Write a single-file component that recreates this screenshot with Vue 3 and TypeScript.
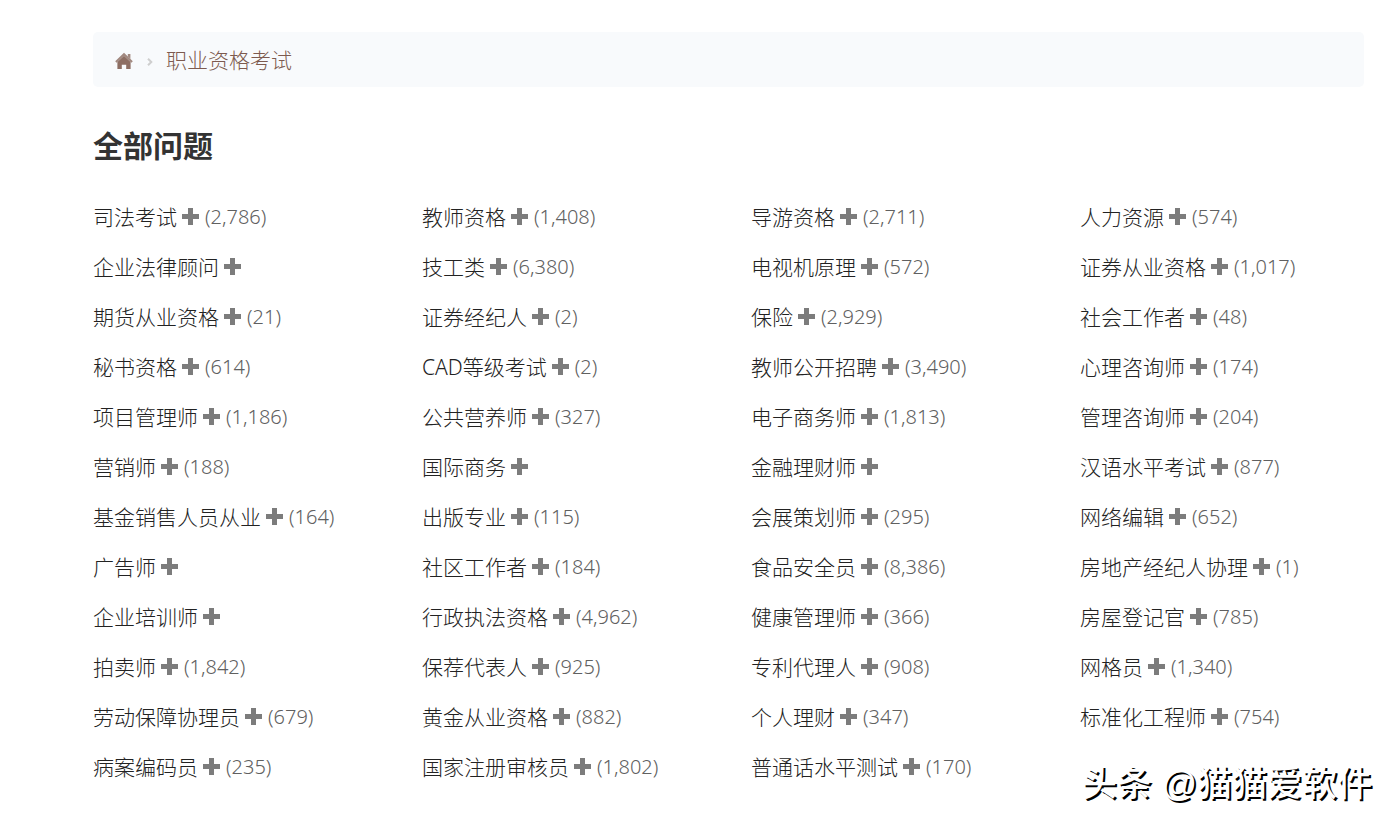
<script setup lang="ts">
interface Category {
  name: string
  count?: string
}

const toItem = (entry: string): Category => {
  const [name, count] = entry.split('|')
  return { name, count }
}

const categories: Category[] = [
  '司法考试|2,786', '教师资格|1,408', '导游资格|2,711', '人力资源|574',
  '企业法律顾问', '技工类|6,380', '电视机原理|572', '证券从业资格|1,017',
  '期货从业资格|21', '证券经纪人|2', '保险|2,929', '社会工作者|48',
  '秘书资格|614', 'CAD等级考试|2', '教师公开招聘|3,490', '心理咨询师|174',
  '项目管理师|1,186', '公共营养师|327', '电子商务师|1,813', '管理咨询师|204',
  '营销师|188', '国际商务', '金融理财师', '汉语水平考试|877',
  '基金销售人员从业|164', '出版专业|115', '会展策划师|295', '网络编辑|652',
  '广告师', '社区工作者|184', '食品安全员|8,386', '房地产经纪人协理|1',
  '企业培训师', '行政执法资格|4,962', '健康管理师|366', '房屋登记官|785',
  '拍卖师|1,842', '保荐代表人|925', '专利代理人|908', '网格员|1,340',
  '劳动保障协理员|679', '黄金从业资格|882', '个人理财|347', '标准化工程师|754',
  '病案编码员|235', '国家注册审核员|1,802', '普通话水平测试|170',
].map(toItem)
</script>

<template>
  <div class="page">
    <nav class="breadcrumb" aria-label="breadcrumb">
      <a class="home" href="#" aria-label="首页">
        <svg width="18" height="18" viewBox="0 0 18 18" aria-hidden="true">
          <path class="roof" d="M9 .8 17.800 9.200 16.400 10.700 9 3.800 1.600 10.700 .2 9.200z" />
          <path d="M9 3.800 15.600 10V17H11.200v-4.200H6.800V17H2.400v-7z" />
          <path class="roof" d="M12.800 2h2.600v5L12.800 4.600z" />
        </svg>
      </a>
      <svg class="chevron" width="6" height="8" viewBox="0 0 6 8" aria-hidden="true">
        <path d="M1 .8 4.300 4 1 7.200" />
      </svg>
      <a class="crumb" href="#">职业资格考试</a>
    </nav>

    <main>
      <h1>全部问题</h1>
      <ul class="grid">
        <li v-for="item in categories" :key="item.name">
          <a class="name" href="#">{{ item.name }}</a>
          <button class="expand" type="button" :aria-label="'展开' + item.name">
            <svg width="17" height="17" viewBox="0 0 17 17" aria-hidden="true">
              <path d="M6 0h5v6h6v5h-6v6H6v-6H0V6h6z" />
            </svg>
          </button>
          <span v-if="item.count" class="count">({{ item.count }})</span>
        </li>
      </ul>
    </main>

    <div class="watermark">头条 @猫猫爱软件</div>
  </div>
</template>

<style>
body {
  margin: 0;
  background: #fff;
}
</style>

<style scoped>
.page {
  position: relative;
  padding: 32px 34px 32px 93px;
  font-family: "Noto Sans", "Noto Sans CJK SC", sans-serif;
  font-size: 21px;
  font-weight: 300;
  color: #222;
}

a {
  color: inherit;
  text-decoration: none;
}

.breadcrumb {
  display: flex;
  align-items: center;
  height: 55px;
  padding-left: 22px;
  border-radius: 5px;
  background: #f8fafc;
  color: #7d5a4e;
}

.home {
  display: flex;
  margin-top: 2px;
}

.home svg {
  fill: #8d6e63;
}

.home .roof {
  fill: #a1887f;
}

.chevron {
  margin: 4px 13px 0 14px;
  fill: none;
  stroke: #cfcfcf;
  stroke-width: 2;
}

.crumb {
  padding-bottom: 2px;
}

h1 {
  margin: 37px 0 23px;
  font-size: 30px;
  line-height: 44px;
  font-weight: 700;
  color: #333;
}

.grid {
  display: grid;
  grid-template-columns: repeat(4, minmax(0, 1fr));
  column-gap: 45px;
  margin: 0;
  padding: 0;
  list-style: none;
}

li {
  display: flex;
  align-items: center;
  height: 50px;
  white-space: nowrap;
}

.expand {
  display: flex;
  margin: 0 6px 0 5px;
  padding: 0;
  border: 0;
  background: none;
  cursor: pointer;
}

.expand svg {
  fill: #7c7c7c;
}

.count {
  font-size: 20px;
  color: #606060;
}

.watermark {
  position: absolute;
  right: 26px;
  bottom: 14px;
  font-family: "Liberation Sans", "Noto Sans CJK SC", sans-serif;
  font-size: 35px;
  line-height: 50px;
  font-weight: 500;
  color: #fff;
  text-shadow: 2px 2px 0 #000;
  white-space: nowrap;
  pointer-events: none;
}
</style>
